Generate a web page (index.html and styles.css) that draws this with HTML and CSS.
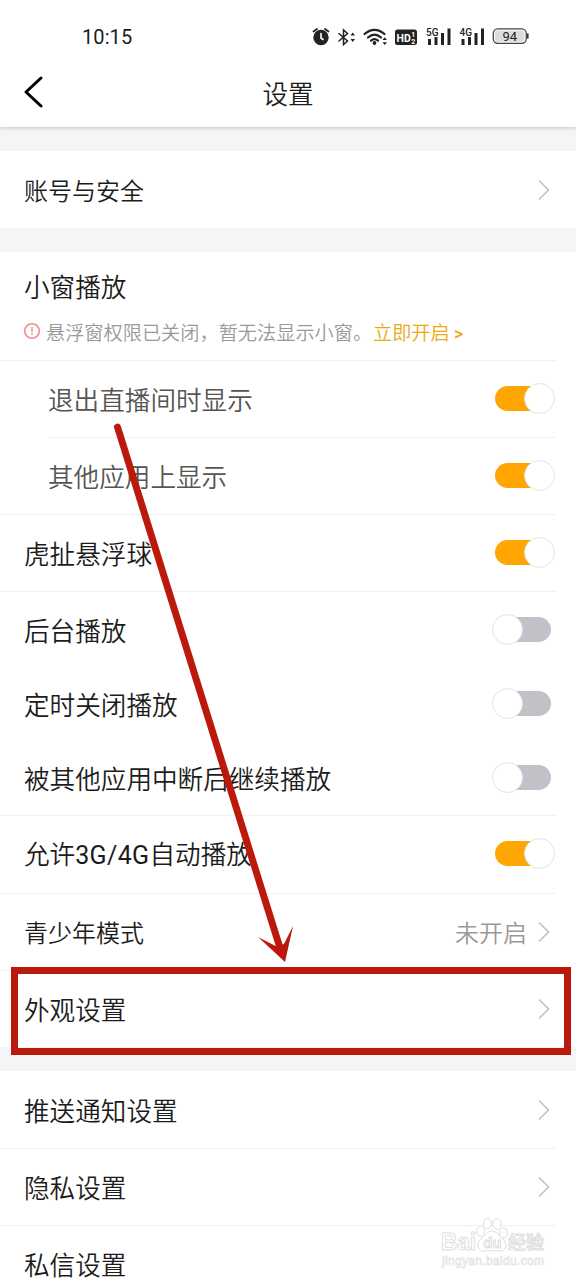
FILE: index.html
```html
<!DOCTYPE html>
<html lang="zh-CN">
<head>
<meta charset="utf-8">
<title>设置</title>
<link rel="stylesheet" href="styles.css">
</head>
<body>
<svg class="defs" width="0" height="0">
  <symbol id="chev" viewBox="0 0 14 22"><path d="M2 1.500 L11.500 11 L2 20.500" fill="none" stroke="#c3c3c3" stroke-width="1.700"/></symbol>
</svg>
<div class="screen">
  <header class="top">
    <div class="status">
      <span class="time">10:15</span>
      <svg class="status-icons" viewBox="0 0 220 24" width="220" height="24">
        <g fill="none" stroke="#222" stroke-linecap="round">
          <circle cx="12" cy="12.500" r="7.700" fill="#222" stroke="none"/>
          <path d="M4.500 6.500 L8 4 M19.500 6.500 L16 4" stroke-width="1.800"/>
          <path d="M12 8.500 V13 L14 14.500" stroke="#fff" stroke-width="1.600"/>
          <path d="M30 8.500 L38.500 16 L34.500 19.500 V5 L38.500 8.500 L30 16" stroke-width="1.500"/>
          <path d="M55.500 9 Q65.500 0.800 75.500 9 M59 12.500 Q65.500 6.800 72 12.500 M62 15.700 Q65.500 12.700 69 15.700" stroke-width="2.200"/>
        </g>
        <g fill="#222">
          <path d="M41.500 10.500 L43.700 7.500 L46 10.500Z M41.500 14 L43.700 17 L46 14Z M73.500 15 L75.700 12.200 L78 15Z M73.500 17.200 L75.700 20 L78 17.200Z"/>
          <circle cx="65.500" cy="18" r="1.900"/>
          <rect x="86" y="4.500" width="22" height="15.500" rx="2.500"/>
          <path d="M119 14h3v6h-3z M125.500 12h3v8h-3z M132 8h3v12h-3z M138.500 3.500h3v16.500h-3z M152.500 14h3v6h-3z M159 12h3v8h-3z M165.500 8h3v12h-3z M172 3.500h3v16.500h-3z"/>
        </g>
        <text x="87.500" y="16.500" class="hd">HD</text>
        <text x="102.300" y="11.700" class="hd-num">1</text>
        <text x="102.300" y="18.500" class="hd-num">2</text>
        <text x="117" y="11" class="net">5G</text>
        <text x="150.500" y="11" class="net">4G</text>
        <rect x="184.300" y="3.800" width="33" height="14.500" rx="4.500" fill="#fff" stroke="#444" stroke-width="1.300"/>
        <rect x="186" y="5.500" width="29.500" height="11.200" rx="3" fill="#dcdcdc"/>
        <path d="M218.800 8.500v5" stroke="#333" stroke-width="1.600"/>
        <text x="200.700" y="15.800" class="batt">94</text>
      </svg>
    </div>
    <div class="nav">
      <svg class="back" width="20" height="32" viewBox="0 0 20 32"><path d="M17 2 L2 16 L17 30" fill="none" stroke="#000" stroke-width="3" stroke-linecap="round" stroke-linejoin="round"/></svg>
      <h1>设置</h1>
    </div>
  </header>

  <section class="group">
    <div class="row small"><span>账号与安全</span><svg class="chev"><use href="#chev"/></svg></div>
  </section>

  <section class="group">
    <div class="intro">
      <h2>小窗播放</h2>
      <p>
        <svg width="18" height="18" viewBox="0 0 18 18"><circle cx="9" cy="9" r="7.300" fill="none" stroke="#ef8d93" stroke-width="1.600"/><path d="M9 5v5M9 11.300v1.600" stroke="#ef8d93" stroke-width="1.500"/></svg>
        <span>悬浮窗权限已关闭，暂无法显示小窗。</span><a>立即开启 <b>&gt;</b></a>
      </p>
    </div>
    <div class="row sub line"><span>退出直播间时显示</span><i class="switch on"></i></div>
    <div class="row sub line inset"><span>其他应用上显示</span><i class="switch on"></i></div>
    <div class="row line"><span>虎扯悬浮球</span><i class="switch on"></i></div>
    <div class="row line background"><span>后台播放</span><i class="switch"></i></div>
    <div class="row tight"><span>定时关闭播放</span><i class="switch"></i></div>
    <div class="row tight"><span>被其他应用中断后继续播放</span><i class="switch"></i></div>
    <div class="row line autoplay"><span>允许<b>3G/4G</b>自动播放</span><i class="switch on"></i></div>
    <div class="row line small"><span>青少年模式</span><em>未开启</em><svg class="chev"><use href="#chev"/></svg></div>
    <div class="row line"><span>外观设置</span><svg class="chev"><use href="#chev"/></svg></div>
  </section>

  <section class="group">
    <div class="row"><span>推送通知设置</span><svg class="chev"><use href="#chev"/></svg></div>
    <div class="row line"><span>隐私设置</span><svg class="chev"><use href="#chev"/></svg></div>
    <div class="row line"><span>私信设置</span></div>
  </section>

  <div class="highlight"></div>
  <svg class="arrow" width="576" height="1280" viewBox="0 0 576 1280">
    <path d="M117.500 427 L280 948" stroke="#bb190b" stroke-width="7" stroke-linecap="round"/>
    <path d="M285 962 L258 937 L276.500 946.500 L284 944 L293 926 Z" fill="#bb190b"/>
  </svg>
  <svg class="watermark" width="116" height="60" viewBox="0 0 116 60">
    <g fill="#fff" stroke="#dedede" stroke-width="1">
      <text x="0" y="35" class="wm-logo" textLength="35" lengthAdjust="spacingAndGlyphs">Bai</text>
      <ellipse cx="39.500" cy="16.500" rx="4" ry="5"/>
      <ellipse cx="46.500" cy="8.500" rx="4" ry="5.500"/>
      <ellipse cx="56" cy="9" rx="4" ry="5.500"/>
      <ellipse cx="62.500" cy="18" rx="4" ry="5"/>
      <path d="M51 16 C46 16 44 21 40 24 C34 29 37 37 43 36 Q51 35 58 36 C65 37 67 29 62 24 C58 21 56 16 51 16Z"/>
      <text x="42" y="33" class="wm-du">du</text>
      <text x="67" y="34" class="wm-cn">经验</text>
      <text x="1" y="50" class="wm-url" textLength="102">jingyan.baidu.com</text>
    </g>
  </svg>
</div>
</body>
</html>
```
FILE: styles.css
```css
*, *::before, *::after { box-sizing: border-box; }
body { margin: 0; background: #fff; font-family: "Noto Sans CJK SC", sans-serif; font-weight: 350; color: #1c1c1c; }
.defs { display: block; }
.screen { position: relative; width: 576px; height: 1280px; overflow: hidden; display: flex; flex-direction: column; gap: 24px; background: #f3f5f7; }
.top { flex: none; height: 127px; background: #fff; box-shadow: 0 1px 4px rgba(0,0,0,.2); }
.status { height: 60px; display: flex; justify-content: space-between; align-items: center; padding: 13px 47px 0 82px; }
.time { font: 400 20px/24px Roboto, sans-serif; letter-spacing: .1px; }
.hd { font: 700 10.500px Roboto, sans-serif; fill: #fff; }
.hd-num { font: 700 7px Roboto, sans-serif; fill: #fff; }
.net { font: 500 10px Roboto, sans-serif; fill: #222; }
.batt { font: 400 13px Roboto, sans-serif; fill: #222; text-anchor: middle; }
.nav { display: grid; grid-template-columns: 20px 1fr 20px; align-items: center; padding: 0 24px; height: 64px; }
h1 { grid-column: 2; margin: 1px 0 0; text-align: center; font-size: 25.600px; font-weight: 350; line-height: 38px; }
.group { flex: none; background: #fff; }
.row { height: 77px; display: flex; align-items: center; padding: 0 22px 0 24px; font-size: 25.600px; line-height: 38px; }
.row > span { flex: 1; }
.row > span b { font: 400 25px/38px Roboto, sans-serif; letter-spacing: .35px; }
.small { font-size: 24px; }
.row.background { height: 76px; padding-top: 2px; }
.row.tight { height: 74px; }
.row.autoplay { height: 78px; }
.sub { padding-left: 48px; color: #555; }
.line { background: linear-gradient(#f1f1f2, #f1f1f2) 0 0 / 556px 1px no-repeat; }
.line.inset { background-position-x: 48px; background-size: 508px 1px; }
.row em { font-style: normal; color: #999; margin-right: 10px; }
.chev { width: 14px; height: 22px; margin-right: 3px; }
.intro { height: 108px; padding: 15px 0 0 24px; }
h2 { margin: 0; font-size: 25.600px; line-height: 38px; font-weight: 350; }
.intro p { display: flex; align-items: center; margin: 12px 0 0 -1px; font-size: 19.200px; line-height: 30px; color: #999; white-space: nowrap; }
.intro p svg { margin: -3px 5px 0 0; }
.intro p span { width: 327px; }
.intro a { color: #eaaa15; }
.intro b { font: 500 18px/20px Roboto, sans-serif; }
.switch { position: relative; width: 63px; height: 31px; margin: 0 -1px 1px 0; }
.switch::before { content: ""; position: absolute; left: 10px; top: 3px; width: 49px; height: 25px; border-radius: 13px; background: #c2c1c7; }
.switch::after { content: ""; position: absolute; left: 0; top: 0; width: 31px; height: 31px; border-radius: 50%; background: #fff; border: 1px solid #e3e3e5; }
.switch.on::before { left: 3px; background: #ffa602; }
.switch.on::after { left: 32px; }
.highlight { position: absolute; left: 11px; top: 967px; width: 560px; height: 88px; border: 7px solid #bb190b; }
.arrow { position: absolute; left: 0; top: 0; }
.watermark { position: absolute; left: 441px; top: 1215px; }
.wm-logo { font: 700 24px "Liberation Sans", sans-serif; }
.wm-du { font: 700 15px "Liberation Sans", sans-serif; }
.wm-cn { font: 500 18px "Noto Sans CJK SC", sans-serif; }
.wm-url { font: 400 12px "Liberation Sans", sans-serif; stroke-width: .6px; }
```
